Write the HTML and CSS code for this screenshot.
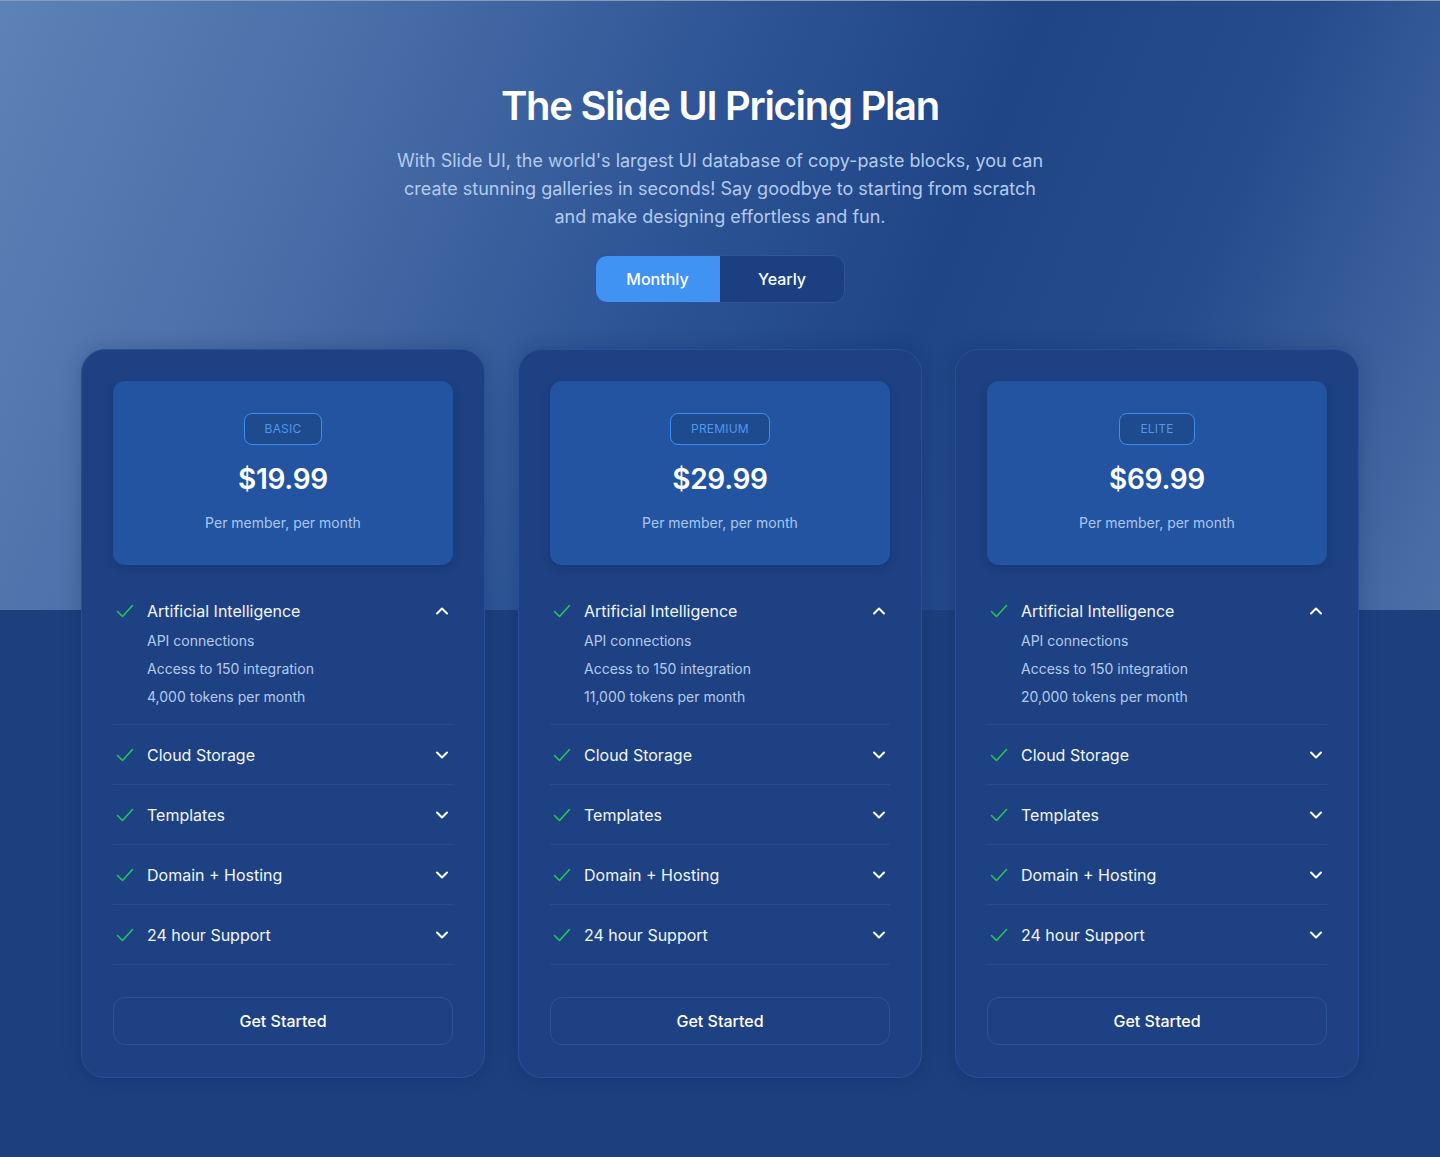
FILE: index.html
```html
<!DOCTYPE html>
<html lang="en">
<head>
<meta charset="utf-8">
<title>The Slide UI Pricing Plan</title>
<link rel="stylesheet" href="styles.css">
</head>
<body>
<main class="page">
  <section class="hero">
    <h1 class="title">The Slide UI Pricing Plan</h1>
    <p class="subtitle">With Slide UI, the world's largest UI database of copy-paste blocks, you can create stunning galleries in seconds! Say goodbye to starting from scratch and make designing effortless and fun.</p>
    <div class="toggle">
      <button class="toggle-btn active">Monthly</button>
      <button class="toggle-btn">Yearly</button>
    </div>
  </section>

  <section class="cards">
    <!-- card 1 -->
    <article class="card">
      <div class="card-head">
        <span class="badge">BASIC</span>
        <div class="price">$19.99</div>
        <div class="per">Per member, per month</div>
      </div>
      <ul class="features">
        <li class="feature open">
          <div class="feature-row">
            <svg class="check" viewBox="0 0 20 20"><path d="M2.5 10.5 L7.5 15.5 L17.5 4.5"/></svg>
            <span class="feature-name">Artificial Intelligence</span>
            <svg class="chev" viewBox="0 0 14 14"><path d="M2 9.5 L7 4.5 L12 9.5"/></svg>
          </div>
          <ul class="sub">
            <li>API connections</li>
            <li>Access to 150 integration</li>
            <li>4,000 tokens per month</li>
          </ul>
        </li>
        <li class="feature"><div class="feature-row"><svg class="check" viewBox="0 0 20 20"><path d="M2.5 10.5 L7.5 15.5 L17.5 4.5"/></svg><span class="feature-name">Cloud Storage</span><svg class="chev" viewBox="0 0 14 14"><path d="M2 4.5 L7 9.5 L12 4.5"/></svg></div></li>
        <li class="feature"><div class="feature-row"><svg class="check" viewBox="0 0 20 20"><path d="M2.5 10.5 L7.5 15.5 L17.5 4.5"/></svg><span class="feature-name">Templates</span><svg class="chev" viewBox="0 0 14 14"><path d="M2 4.5 L7 9.5 L12 4.5"/></svg></div></li>
        <li class="feature"><div class="feature-row"><svg class="check" viewBox="0 0 20 20"><path d="M2.5 10.5 L7.5 15.5 L17.5 4.5"/></svg><span class="feature-name">Domain + Hosting</span><svg class="chev" viewBox="0 0 14 14"><path d="M2 4.5 L7 9.5 L12 4.5"/></svg></div></li>
        <li class="feature"><div class="feature-row"><svg class="check" viewBox="0 0 20 20"><path d="M2.5 10.5 L7.5 15.5 L17.5 4.5"/></svg><span class="feature-name">24 hour Support</span><svg class="chev" viewBox="0 0 14 14"><path d="M2 4.5 L7 9.5 L12 4.5"/></svg></div></li>
      </ul>
      <button class="cta">Get Started</button>
    </article>

    <!-- card 2 -->
    <article class="card">
      <div class="card-head">
        <span class="badge">PREMIUM</span>
        <div class="price">$29.99</div>
        <div class="per">Per member, per month</div>
      </div>
      <ul class="features">
        <li class="feature open">
          <div class="feature-row">
            <svg class="check" viewBox="0 0 20 20"><path d="M2.5 10.5 L7.5 15.5 L17.5 4.5"/></svg>
            <span class="feature-name">Artificial Intelligence</span>
            <svg class="chev" viewBox="0 0 14 14"><path d="M2 9.5 L7 4.5 L12 9.5"/></svg>
          </div>
          <ul class="sub">
            <li>API connections</li>
            <li>Access to 150 integration</li>
            <li>11,000 tokens per month</li>
          </ul>
        </li>
        <li class="feature"><div class="feature-row"><svg class="check" viewBox="0 0 20 20"><path d="M2.5 10.5 L7.5 15.5 L17.5 4.5"/></svg><span class="feature-name">Cloud Storage</span><svg class="chev" viewBox="0 0 14 14"><path d="M2 4.5 L7 9.5 L12 4.5"/></svg></div></li>
        <li class="feature"><div class="feature-row"><svg class="check" viewBox="0 0 20 20"><path d="M2.5 10.5 L7.5 15.5 L17.5 4.5"/></svg><span class="feature-name">Templates</span><svg class="chev" viewBox="0 0 14 14"><path d="M2 4.5 L7 9.5 L12 4.5"/></svg></div></li>
        <li class="feature"><div class="feature-row"><svg class="check" viewBox="0 0 20 20"><path d="M2.5 10.5 L7.5 15.5 L17.5 4.5"/></svg><span class="feature-name">Domain + Hosting</span><svg class="chev" viewBox="0 0 14 14"><path d="M2 4.5 L7 9.5 L12 4.5"/></svg></div></li>
        <li class="feature"><div class="feature-row"><svg class="check" viewBox="0 0 20 20"><path d="M2.5 10.5 L7.5 15.5 L17.5 4.5"/></svg><span class="feature-name">24 hour Support</span><svg class="chev" viewBox="0 0 14 14"><path d="M2 4.5 L7 9.5 L12 4.5"/></svg></div></li>
      </ul>
      <button class="cta">Get Started</button>
    </article>

    <!-- card 3 -->
    <article class="card">
      <div class="card-head">
        <span class="badge">ELITE</span>
        <div class="price">$69.99</div>
        <div class="per">Per member, per month</div>
      </div>
      <ul class="features">
        <li class="feature open">
          <div class="feature-row">
            <svg class="check" viewBox="0 0 20 20"><path d="M2.5 10.5 L7.5 15.5 L17.5 4.5"/></svg>
            <span class="feature-name">Artificial Intelligence</span>
            <svg class="chev" viewBox="0 0 14 14"><path d="M2 9.5 L7 4.5 L12 9.5"/></svg>
          </div>
          <ul class="sub">
            <li>API connections</li>
            <li>Access to 150 integration</li>
            <li>20,000 tokens per month</li>
          </ul>
        </li>
        <li class="feature"><div class="feature-row"><svg class="check" viewBox="0 0 20 20"><path d="M2.5 10.5 L7.5 15.5 L17.5 4.5"/></svg><span class="feature-name">Cloud Storage</span><svg class="chev" viewBox="0 0 14 14"><path d="M2 4.5 L7 9.5 L12 4.5"/></svg></div></li>
        <li class="feature"><div class="feature-row"><svg class="check" viewBox="0 0 20 20"><path d="M2.5 10.5 L7.5 15.5 L17.5 4.5"/></svg><span class="feature-name">Templates</span><svg class="chev" viewBox="0 0 14 14"><path d="M2 4.5 L7 9.5 L12 4.5"/></svg></div></li>
        <li class="feature"><div class="feature-row"><svg class="check" viewBox="0 0 20 20"><path d="M2.5 10.5 L7.5 15.5 L17.5 4.5"/></svg><span class="feature-name">Domain + Hosting</span><svg class="chev" viewBox="0 0 14 14"><path d="M2 4.5 L7 9.5 L12 4.5"/></svg></div></li>
        <li class="feature"><div class="feature-row"><svg class="check" viewBox="0 0 20 20"><path d="M2.5 10.5 L7.5 15.5 L17.5 4.5"/></svg><span class="feature-name">24 hour Support</span><svg class="chev" viewBox="0 0 14 14"><path d="M2 4.5 L7 9.5 L12 4.5"/></svg></div></li>
      </ul>
      <button class="cta">Get Started</button>
    </article>
  </section>
</main>
</body>
</html>
```

FILE: styles.css
```css
* { box-sizing: border-box; }

html, body {
  margin: 0;
  padding: 0;
}

body {
  font-family: Inter, "Noto Sans", "Liberation Sans", sans-serif;
  color: #ffffff;
  background-color: #1c3f7e;
  background-image:
    linear-gradient(112deg, #5d82b7 0%, #4a6ea8 22%, #2d5495 45%, #1f4587 62%, #264c8e 78%, #4d6fa8 100%);
  background-size: 100% 610px;
  background-repeat: no-repeat;
  min-height: 1157px;
  border-top: 1px solid #8a9bb5;
}

.page {
  padding-top: 81px;
  padding-bottom: 80px;
}

.hero {
  display: flex;
  flex-direction: column;
  align-items: center;
  text-align: center;
}

.title {
  margin: 0;
  font-size: 40px;
  line-height: 48px;
  font-weight: 600;
  letter-spacing: -1.3px;
  color: #ffffff;
}

.subtitle {
  margin: 17px 0 0;
  width: 660px;
  font-size: 18px;
  line-height: 28px;
  color: #b3cbef;
}

.toggle {
  margin-top: 24px;
  display: flex;
  border: 1px solid #2f5597;
  border-radius: 12px;
  background: #1b3f80;
  overflow: hidden;
}

.toggle-btn {
  width: 124px;
  height: 46px;
  border: 0;
  background: transparent;
  color: #ffffff;
  font-family: inherit;
  font-size: 16px;
  font-weight: 500;
  padding: 0;
}

.toggle-btn.active {
  background: #4193f3;
  border-radius: 11px 0 0 11px;
  margin: -1px 0 -1px -1px;
  height: 48px;
  width: 125px;
}

.cards {
  margin: 46px auto 0;
  width: 1278px;
  display: grid;
  grid-template-columns: repeat(3, 404px);
  column-gap: 33px;
}

.card {
  background: #1d4182;
  border: 1px solid #28509a;
  border-radius: 24px;
  padding: 31px 31px 32px;
  display: flex;
  flex-direction: column;
  box-shadow: 0 0 18px rgba(10, 30, 70, 0.25);
}

.card-head {
  background: #2354a1;
  border-radius: 12px;
  height: 184px;
  display: flex;
  flex-direction: column;
  align-items: center;
  padding-top: 32px;
  box-shadow: 0 4px 10px rgba(10, 30, 70, 0.18);
}

.badge {
  display: inline-block;
  height: 32px;
  line-height: 30px;
  padding: 0 20px;
  border: 1px solid #3b8ff0;
  border-radius: 8px;
  background: #1e4a8e;
  color: #4f98ef;
  font-size: 12px;
  font-weight: 400;
  letter-spacing: 0.2px;
}

.price {
  margin-top: 16px;
  font-size: 28px;
  line-height: 36px;
  font-weight: 600;
  letter-spacing: -0.3px;
  color: #ffffff;
}

.per {
  margin-top: 16px;
  font-size: 14px;
  line-height: 20px;
  color: #a9c7f1;
}

.features {
  list-style: none;
  margin: 16px 0 0;
  padding: 0;
}

.feature {
  border-bottom: 1px solid #274c8f;
  padding: 0 4px 0 2px;
}

.feature-row {
  display: flex;
  align-items: center;
  height: 59px;
}

.check {
  width: 20px;
  height: 20px;
  flex: none;
  fill: none;
  stroke: #22c55e;
  stroke-width: 1.6;
  stroke-linecap: round;
  stroke-linejoin: round;
}

.feature-name {
  margin-left: 12px;
  flex: 1;
  font-size: 16px;
  line-height: 24px;
  color: #f2f6fc;
}

.chev {
  width: 14px;
  height: 14px;
  flex: none;
  margin-right: 0;
  fill: none;
  stroke: #ffffff;
  stroke-width: 2;
  stroke-linecap: round;
  stroke-linejoin: round;
}

.sub {
  list-style: none;
  margin: -13px 0 0;
  padding: 0 0 13px 32px;
}

.sub li {
  font-size: 14px;
  line-height: 28px;
  color: #b3cbef;
}

.cta {
  margin-top: 32px;
  height: 48px;
  width: 100%;
  border: 1px solid #2c5498;
  border-radius: 12px;
  background: transparent;
  color: #ffffff;
  font-family: inherit;
  font-size: 16px;
  font-weight: 500;
}
```
